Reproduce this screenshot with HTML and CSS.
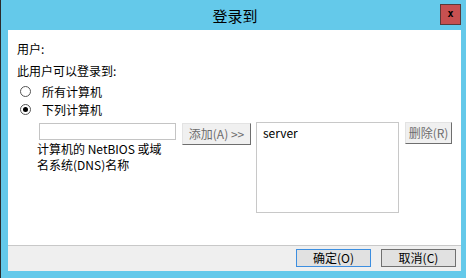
FILE: index.html
```html
<!DOCTYPE html>
<html>
<head>
  <title>登录到</title>
  <link rel="stylesheet" href="styles.css">
</head>
<body>
  <div class="window">
    <div class="titlebar">
      <span class="title">登录到</span>
      <span class="close">x</span>
    </div>

    <div class="content">
      <p class="heading">用户:</p>
      <p class="line">此用户可以登录到:</p>
      <div class="radio"><span class="dot"></span>所有计算机</div>
      <div class="radio"><span class="dot checked"></span>下列计算机</div>

      <div class="lower">
        <div class="inputCol">
          <div class="textbox"></div>
          <p class="hint">计算机的 NetBIOS 或域<br>名系统(DNS)名称</p>
        </div>
        <div class="btn addBtn">添加(A) &gt;&gt;</div>
        <div class="listbox">server</div>
        <div class="btn delBtn">删除(R)</div>
      </div>
    </div>

    <div class="footer">
      <div class="fbtn ok">确定(O)</div>
      <div class="fbtn">取消(C)</div>
    </div>
  </div>
</body>
</html>
```

FILE: styles.css
```css
body {margin: 0; font-family: "Noto Sans CJK SC", "Noto Sans", sans-serif; font-size: 12px; color: #000;}
p {margin: 0;}

.window {width: 466px; height: 278px; border-left: 1px solid #2b2b2b; background-color: #64c9ea; padding: 0 5px 7px 7px; box-sizing: border-box; display: flex; flex-direction: column;}

.titlebar {position: relative; height: 30px; display: flex; align-items: center; justify-content: center;}
.title {font-size: 15px; margin-left: 1px;}
.close {position: absolute; right: 0; top: 4px; width: 21px; height: 21px; box-sizing: border-box; background-color: #c75050; border: 1px solid #5a3a3a; font-family: "DejaVu Sans Mono", monospace; font-weight: bold; font-size: 10px; line-height: 18px; text-align: center;}

.content {flex: 1; background-color: #fff; border-bottom: 1px solid #c8c8c8; padding: 11px 9px 0 9px;}
.heading {line-height: 16px;}
.line {line-height: 16px; margin-top: 6px;}
.radio {display: flex; align-items: center; height: 18px; margin-left: 3px;}
.line + .radio {margin-top: 3px;}
.dot {width: 11px; height: 11px; box-sizing: border-box; border: 1px solid #555; border-radius: 50%; margin-right: 11px; display: flex; align-items: center; justify-content: center;}
.checked::after {content: ""; width: 5px; height: 5px; border-radius: 50%; background-color: #000;}

.lower {display: flex; align-items: flex-start; margin-top: 5px; padding-left: 22px;}
.inputCol {width: 137px;}
.textbox {height: 17px; box-sizing: border-box; border: 1px solid #c4c4c4;}
.hint {line-height: 16px; margin-top: 1px; margin-left: -2px; white-space: nowrap;}

.btn {height: 22px; box-sizing: border-box; background-color: #f0f0f0; color: #6d6d6d; border: 1px solid; border-color: #e3e3e3 #6e6e6e #6e6e6e #e3e3e3; line-height: 19px; text-align: center;}
.addBtn {width: 69px; margin-left: 6px;}
.listbox {width: 143px; height: 91px; box-sizing: border-box; border: 1px solid #c8c8c8; margin-left: 5px; margin-top: -1px; padding: 2px 6px; line-height: 16px;}
.delBtn {width: 47px; margin-left: 6px; margin-top: -1px;}

.footer {height: 25px; background-color: #efefef; display: flex; justify-content: flex-end; align-items: flex-start; padding: 3px 5px 0 0; box-sizing: border-box; gap: 10px;}
.fbtn {width: 75px; height: 18px; box-sizing: border-box; background-color: #e1e1e1; border: 1px solid #707070; line-height: 16px; text-align: center;}
.ok {border-color: #3c8ee0;}
```
